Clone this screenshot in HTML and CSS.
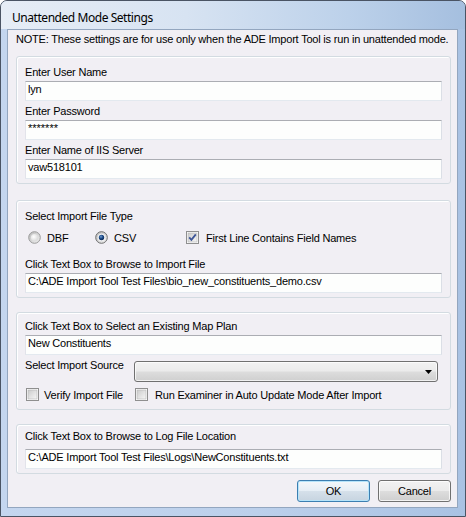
FILE: index.html
```html
<!DOCTYPE html>
<html>
<head>
<meta charset="utf-8">
<link rel="stylesheet" href="styles.css">
</head>
<body>
<div class="window">
  <div class="titlebar"><span class="title">Unattended Mode Settings</span></div>
  <div class="client">
    <div class="note">NOTE: These settings are for use only when the ADE Import Tool is run in unattended mode.</div>

    <div class="group g1">
      <div class="label">Enter User Name</div>
      <div class="textbox">lyn</div>
      <div class="label sp">Enter Password</div>
      <div class="textbox pw">*******</div>
      <div class="label sp">Enter Name of IIS Server</div>
      <div class="textbox">vaw518101</div>
    </div>

    <div class="group g2">
      <div class="label">Select Import File Type</div>
      <div class="optrow">
        <div class="opt w-dbf">
          <svg class="radio" width="13" height="13" viewBox="0 0 13 13">
            <defs>
              <linearGradient id="rgA" x1="0" y1="0" x2="1" y2="1">
                <stop offset="0" stop-color="#b9b9b9"/>
                <stop offset="1" stop-color="#f3f3f3"/>
              </linearGradient>
              <radialGradient id="rgB" cx="0.4" cy="0.4" r="0.7">
                <stop offset="0" stop-color="#ffffff"/>
                <stop offset="1" stop-color="#d6d6d6"/>
              </radialGradient>
            </defs>
            <circle cx="6.5" cy="6.5" r="5.8" fill="url(#rgA)" stroke="#9a9a9a" stroke-width="1"/>
            <circle cx="6.5" cy="6.5" r="3.6" fill="url(#rgB)"/>
          </svg>
          <span>DBF</span>
        </div>
        <div class="opt w-csv">
          <svg class="radio" width="13" height="13" viewBox="0 0 13 13">
            <defs>
              <linearGradient id="rgC" x1="0" y1="0" x2="1" y2="1">
                <stop offset="0" stop-color="#b9b9b9"/>
                <stop offset="1" stop-color="#f3f3f3"/>
              </linearGradient>
              <radialGradient id="rgD" cx="0.4" cy="0.35" r="0.7">
                <stop offset="0" stop-color="#6f9ad0"/>
                <stop offset="0.5" stop-color="#1c4a86"/>
                <stop offset="1" stop-color="#0b2650"/>
              </radialGradient>
            </defs>
            <circle cx="6.5" cy="6.5" r="5.8" fill="url(#rgC)" stroke="#6d6d6d" stroke-width="1"/>
            <circle cx="6.5" cy="6.5" r="3.8" fill="#f4f4f4"/>
            <circle cx="6.5" cy="6.5" r="2.7" fill="url(#rgD)"/>
          </svg>
          <span>CSV</span>
        </div>
        <div class="opt">
          <svg class="check" width="13" height="13" viewBox="0 0 13 13">
            <defs>
              <linearGradient id="cbA" x1="0" y1="0" x2="1" y2="1">
                <stop offset="0" stop-color="#cbcbcb"/>
                <stop offset="1" stop-color="#f7f7f7"/>
              </linearGradient>
            </defs>
            <rect x="0.5" y="0.5" width="12" height="12" fill="#ffffff" stroke="#8f8f8f"/>
            <rect x="2" y="2" width="9" height="9" fill="url(#cbA)" stroke="#b4b4b4" stroke-width="0.6"/>
            <path d="M3.2 6.4 L5.4 8.9 L9.8 3.4" fill="none" stroke="#3d5597" stroke-width="1.8"/>
          </svg>
          <span class="chk-gap">First Line Contains Field Names</span>
        </div>
      </div>
      <div class="label sp2">Click Text Box to Browse to Import File</div>
      <div class="textbox">C:\ADE Import Tool Test Files\bio_new_constituents_demo.csv</div>
    </div>

    <div class="group g3">
      <div class="label">Click Text Box to Select an Existing Map Plan</div>
      <div class="textbox">New Constituents</div>
      <div class="selrow">
        <div class="label">Select Import Source</div>
        <div class="combo">
          <svg class="arrow" width="7" height="4" viewBox="0 0 7 4"><path d="M0 0 H7 L3.5 4 Z" fill="#000"/></svg>
        </div>
      </div>
      <div class="chkrow">
        <div class="opt w-verify">
          <svg class="check" width="13" height="13" viewBox="0 0 13 13">
            <defs>
              <linearGradient id="cbB" x1="0" y1="0" x2="1" y2="1">
                <stop offset="0" stop-color="#cbcbcb"/>
                <stop offset="1" stop-color="#f7f7f7"/>
              </linearGradient>
            </defs>
            <rect x="0.5" y="0.5" width="12" height="12" fill="#ffffff" stroke="#8f8f8f"/>
            <rect x="2" y="2" width="9" height="9" fill="url(#cbB)" stroke="#b4b4b4" stroke-width="0.6"/>
          </svg>
          <span class="chk-gap2">Verify Import File</span>
        </div>
        <div class="opt">
          <svg class="check" width="13" height="13" viewBox="0 0 13 13">
            <defs>
              <linearGradient id="cbC" x1="0" y1="0" x2="1" y2="1">
                <stop offset="0" stop-color="#cbcbcb"/>
                <stop offset="1" stop-color="#f7f7f7"/>
              </linearGradient>
            </defs>
            <rect x="0.5" y="0.5" width="12" height="12" fill="#ffffff" stroke="#8f8f8f"/>
            <rect x="2" y="2" width="9" height="9" fill="url(#cbC)" stroke="#b4b4b4" stroke-width="0.6"/>
          </svg>
          <span class="chk-gap">Run Examiner in Auto Update Mode After Import</span>
        </div>
      </div>
    </div>

    <div class="group g4">
      <div class="label">Click Text Box to Browse to Log File Location</div>
      <div class="textbox tb4">C:\ADE Import Tool Test Files\Logs\NewConstituents.txt</div>
    </div>

    <div class="buttons">
      <div class="btn default">OK</div>
      <div class="btn">Cancel</div>
    </div>
  </div>
</div>
</body>
</html>
```

FILE: styles.css
```css
* { box-sizing: border-box; }

html, body {
  margin: 0;
  padding: 0;
  background: #ffffff;
}

body {
  font-family: "Liberation Sans", Arial, sans-serif;
  font-size: 11px;
  line-height: 13px;
  letter-spacing: -0.2px;
  color: #000000;
}

.window {
  width: 466px;
  height: 517px;
  border: 1px solid #4a5464;
  border-radius: 7px 7px 0 0;
  background: linear-gradient(to right, #c4d6ef 0%, #bcd0eb 55%, #a9c2e3 100%);
  padding: 0 7px 8px 6px;
  display: flex;
  flex-direction: column;
  overflow: hidden;
}

.titlebar {
  flex: none;
  height: 28px;
  margin: 0 -7px 0 -6px;
  padding: 9px 0 0 11px;
  background: linear-gradient(to right, #e6edf6 0%, #d7e3f2 40%, #bcd1ea 75%, #a5bfdf 100%);
}

.title {
  font-family: "Noto Sans", "Open Sans", sans-serif;
  font-size: 12px;
  line-height: 16px;
  letter-spacing: -0.45px;
  color: #000000;
}

.client {
  flex: 1;
  background: #f1eff4;
  border: 1px solid #93a6bf;
  padding: 3px 6px 0 8px;
}

.note {
  white-space: nowrap;
}

.group {
  border: 1px solid #d3dbe1;
  border-radius: 3px;
  box-shadow: inset 1px 1px 0 #ffffff;
  padding: 9px 8px 4px 8px;
}

.g1 { margin-top: 10px; }
.g2 { margin-top: 16px; }
.g3 { margin-top: 14px; padding-top: 7px; padding-bottom: 7px; }
.g4 { margin-top: 14px; padding-top: 5px; }

.label {
  white-space: nowrap;
}

.label.sp { margin-top: 4px; }
.label.sp2 { margin-top: 13px; }

.textbox {
  margin-top: 2px;
  height: 20px;
  background: #fdfefd;
  border-top: 1px solid #abadb3;
  border-left: 1px solid #e2e3ea;
  border-right: 1px solid #dbdfe6;
  border-bottom: 1px solid #e3e9ef;
  padding: 1px 2px 0 2px;
  white-space: nowrap;
  overflow: hidden;
}

.textbox.tb4 { margin-top: 6px; }

.textbox.pw {
  letter-spacing: 0;
}

.optrow {
  display: flex;
  margin-top: 8px;
  padding-left: 3px;
}

.opt {
  display: flex;
  align-items: flex-start;
  white-space: nowrap;
}

.opt span {
  padding-top: 1px;
  margin-left: 6px;
}

.opt span.chk-gap { margin-left: 7px; }
.opt span.chk-gap2 { margin-left: 5px; }

.radio, .check { flex: none; display: block; }

.w-dbf { width: 67px; }
.w-csv { width: 91px; }

.selrow {
  display: flex;
  align-items: flex-start;
  margin-top: 4px;
}

.combo {
  margin-left: auto;
  margin-right: 4px;
  margin-top: 2px;
  width: 304px;
  height: 21px;
  border: 1px solid #707070;
  border-radius: 3px;
  background: linear-gradient(to bottom, #f2f2f2 0%, #ebebeb 48%, #dddddd 52%, #cfcfcf 100%);
  box-shadow: inset 0 0 0 1px rgba(255,255,255,0.7);
  display: flex;
  align-items: center;
  justify-content: flex-end;
  padding-right: 5px;
}

.arrow { display: block; }

.chkrow {
  display: flex;
  margin-top: 6px;
  padding-left: 1px;
}

.w-verify { width: 109px; }

.buttons {
  display: flex;
  justify-content: flex-end;
  gap: 8px;
  margin-top: 6px;
}

.btn {
  width: 73px;
  height: 22px;
  border: 1px solid #707070;
  border-radius: 3px;
  background: linear-gradient(to bottom, #f2f2f2 0%, #ebebeb 48%, #dddddd 52%, #cfcfcf 100%);
  box-shadow: inset 0 0 0 1px rgba(255,255,255,0.75);
  display: flex;
  align-items: center;
  justify-content: center;
  padding-top: 1px;
}

.btn.default {
  border-color: #3c7fb1;
  background: linear-gradient(to bottom, #f4f8fb 0%, #e6eef5 48%, #d5e0ea 52%, #c7d4e0 100%);
  box-shadow: inset 0 0 0 1px #b6e4fa;
}
```
